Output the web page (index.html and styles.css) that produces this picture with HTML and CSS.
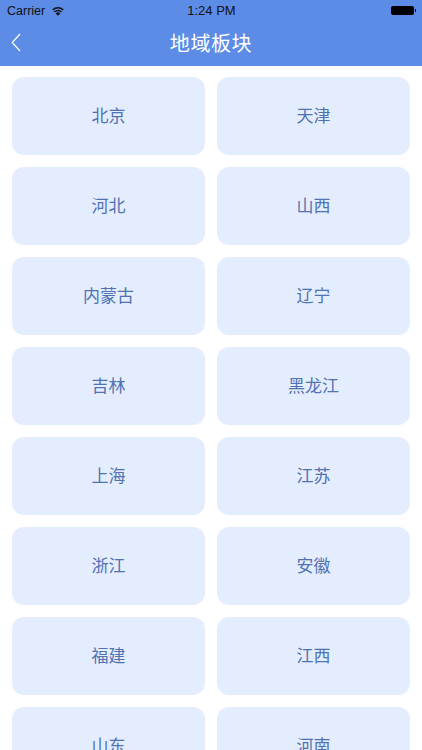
FILE: index.html
```html
<!DOCTYPE html>
<html lang="zh">
<head>
<meta charset="utf-8">
<title>地域板块</title>
<link rel="stylesheet" href="styles.css">
</head>
<body>
<div class="screen">
  <header class="header">
    <div class="status">
      <div class="status-left">
        <span>Carrier</span>
        <svg class="wifi" viewBox="0 0 14 10" width="12" height="9">
          <path d="M7 10 4.4 7.2a3.5 3.5 0 0 1 5.2 0Z" fill="#111"/>
          <path d="M2.9 5.6a5.8 5.8 0 0 1 8.2 0" fill="none" stroke="#111" stroke-width="1.7"/>
          <path d="M.8 3.2a8.8 8.8 0 0 1 12.4 0" fill="none" stroke="#111" stroke-width="1.7"/>
        </svg>
      </div>
      <span class="time">1:24 PM</span>
      <div class="battery"><span class="battery-body"></span><span class="battery-tip"></span></div>
    </div>
    <div class="nav">
      <svg class="back" viewBox="0 0 10 19" width="10" height="19">
        <path d="M9 1 1.2 9.5 9 18" fill="none" stroke="#fff" stroke-width="1.2"/>
      </svg>
      <h1 class="title">地域板块</h1>
    </div>
  </header>
  <main class="grid">
    <a class="card">北京</a>
    <a class="card">天津</a>
    <a class="card">河北</a>
    <a class="card">山西</a>
    <a class="card">内蒙古</a>
    <a class="card">辽宁</a>
    <a class="card">吉林</a>
    <a class="card">黑龙江</a>
    <a class="card">上海</a>
    <a class="card">江苏</a>
    <a class="card">浙江</a>
    <a class="card">安徽</a>
    <a class="card">福建</a>
    <a class="card">江西</a>
    <a class="card">山东</a>
    <a class="card">河南</a>
  </main>
</div>
</body>
</html>
```
FILE: styles.css
```css
* { box-sizing: border-box; }
html, body { margin: 0; padding: 0; background: #fff; }
body { font-family: "Noto Sans CJK SC", "Liberation Sans", sans-serif; }
.screen { width: 422px; height: 750px; overflow: hidden; background: #fff; }
.header { height: 66px; background: #5c8ce6; }
.status {
  height: 21px;
  padding: 0 6px 0 7px;
  display: grid;
  grid-template-columns: 1fr auto 1fr;
  align-items: center;
  font-family: "Liberation Sans", sans-serif;
  font-size: 12.5px;
  color: #111;
}
.status-left { display: flex; align-items: center; gap: 7px; }
.wifi { display: block; margin-top: 1px; }
.time { font-weight: 500; font-size: 13px; }
.battery { display: flex; align-items: center; justify-content: flex-end; }
.battery-body { width: 23px; height: 9px; background: #000; border-radius: 2px; }
.battery-tip { width: 1.5px; height: 3px; background: #000; margin-left: 0.5px; }
.nav { height: 44px; position: relative; display: flex; align-items: center; justify-content: center; }
.back { position: absolute; left: 11px; top: 12px; }
.title { margin: 0; font-size: 20px; font-weight: 400; color: #fff; line-height: 1; letter-spacing: 0.6px; }
.grid {
  display: grid;
  grid-template-columns: 193px 193px;
  grid-auto-rows: 78px;
  gap: 12px;
  padding: 11px 12px 0;
}
.card {
  display: flex;
  align-items: center;
  justify-content: center;
  padding-bottom: 4px;
  background: #e4edfd;
  border-radius: 12px;
  color: #5072b2;
  font-size: 17px;
}
```
